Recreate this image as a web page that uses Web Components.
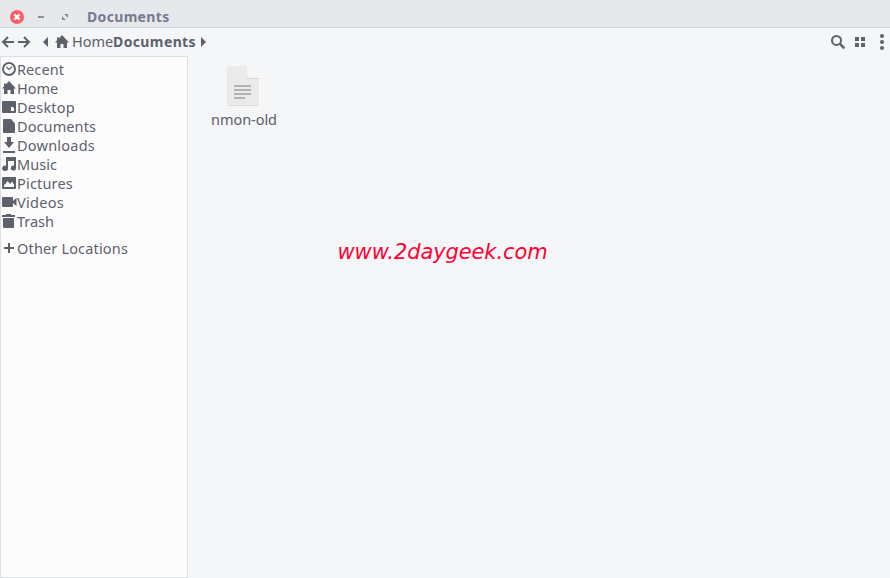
<!DOCTYPE html>
<html lang="en"><head><meta charset="utf-8"><title>Documents</title>
<style>html,body{margin:0;height:100%;overflow:hidden;background:#f5f6f8}</style></head>
<body>
<file-window></file-window>
<script>
const ICONS = {
  recent:'<circle cx="7" cy="7" r="6" fill="none" stroke="currentColor" stroke-width="1.9"/><path d="M4.4 5 7 7.4 10.2 4.6" fill="none" stroke="currentColor" stroke-width="1.2"/>',
  home:'<path d="M7 0 14 7.5H12V13H8.5V9H5.5V13H2V7.5H0L2 5.3V2.5H4V3.2Z"/>',
  desktop:'<path fill-rule="evenodd" d="M1 1H13Q14 1 14 2V12Q14 13 13 13H1Q0 13 0 12V2Q0 1 1 1ZM9 7V11H12V8L11 7Z"/>',
  document:'<path d="M2 0H9L13 4.5V13Q13 14 12 14H2Q1 14 1 13V1Q1 0 2 0Z"/>',
  download:'<path d="M5 -1H9V4H12L7 10 2 4H5ZM1 13H13V15H1Z"/>',
  music:'<path d="M4 0H14V11A2.6 2.5 0 1 1 12 8.6V4H6V11.3A2.9 2.7 0 1 1 4 8.8Z"/>',
  picture:'<path fill-rule="evenodd" d="M1 1H13Q14 1 14 2V12Q14 13 13 13H1Q0 13 0 12V2Q0 1 1 1ZM2 11H12V8.5L10 5.5 8.3 8 5.5 5 4 7.5 2 9Z"/>',
  video:'<path d="M1 2H10Q11 2 11 3V6L14.5 2.7V11.3L11 8V11Q11 12 10 12H1Q0 12 0 11V3Q0 2 1 2Z"/>',
  trash:'<path d="M0 1H4V0H9V1H13V3H0ZM1 4H12V13Q12 14 11 14H2Q1 14 1 13Z"/>',
  plus:'<path d="M6 2H8V6H12V8H8V12H6V8H2V6H6Z"/>',
  back:'<path d="M7 2 2 7 7 12M2 7H13" fill="none" stroke="currentColor" stroke-width="2"/>',
  forward:'<path d="M7 2 12 7 7 12M12 7H1" fill="none" stroke="currentColor" stroke-width="2"/>',
  left:'<path d="M9 2V12L4 7Z"/>',
  right:'<path d="M5 2V12L10 7Z"/>',
  search:'<circle cx="5.5" cy="5.4" r="4.5" fill="none" stroke="currentColor" stroke-width="2"/><path d="m8.8 8.7 4.5 4.6" stroke="currentColor" stroke-width="2.4"/>',
  grid:'<path d="M2 2H6V6H2ZM8 2H12V6H8ZM2 8H6V12H2ZM8 8H12V12H8Z"/>',
  close:'<circle cx="7" cy="7" r="7" fill="#f46067"/><path d="m4.5 4.5 5 5m0-5-5 5" stroke="#fff" stroke-width="2.3"/>',
  minimize:'<path d="M4 6H10V8H4Z"/>',
  maximize:'<path d="M6 4H10V8ZM4 6V10H8Z"/>'
};
class UiIcon extends HTMLElement {
  connectedCallback(){
    this.attachShadow({mode:'open'}).innerHTML = `<style>:host{display:block;width:14px;height:14px;flex:none}svg{display:block;overflow:visible}</style><svg width="14" height="14" viewBox="0 0 14 14" fill="currentColor">${ICONS[this.getAttribute('name')]}</svg>`;
  }
}
/* Label that distributes its letters across a given advance width. */
class FitLabel extends HTMLElement {
  connectedCallback(){
    const text = this.getAttribute('text'), w = +this.getAttribute('width');
    this.attachShadow({mode:'open'}).innerHTML = `<style>:host{display:block;white-space:pre;flex:none;width:${w}px}</style><span></span>`;
    const s = this.shadowRoot.querySelector('span');
    s.textContent = text;
    s.style.letterSpacing = (w - s.getBoundingClientRect().width) / text.length + 'px';
  }
}
class TitleBar extends HTMLElement {
  connectedCallback(){
    this.attachShadow({mode:'open'}).innerHTML = `<style>
:host{display:flex;align-items:center;box-sizing:border-box;height:28px;padding:6px 0 0 10px;gap:10px;background:#e7e8eb;border-bottom:1px solid #d2d4d8;color:#8b8f9a;font-weight:700}
ui-icon{margin-bottom:-1px}
fit-label{margin:-1px 0 0 5px;color:#757b8f;font-size:14px}</style>
<ui-icon name="close"></ui-icon><ui-icon name="minimize"></ui-icon><ui-icon name="maximize"></ui-icon><fit-label text="Documents" width="82.5"></fit-label>`;
  }
}
class PathBar extends HTMLElement {
  connectedCallback(){
    this.attachShadow({mode:'open'}).innerHTML = `<style>
:host{display:flex;align-items:center;box-sizing:border-box;height:28px;padding:0 1px}
.path{display:flex;align-items:center;flex:1}
.nav{display:flex;gap:2px;margin-right:8px}
.home{margin:0 3px 0 2px}
fit-label{margin-top:-2px}
.strong{font-weight:700;font-size:14px}
.actions{display:flex;align-items:center;gap:8px}
.more{display:grid;gap:2px;width:14px;justify-items:center}
.more i{width:4px;height:4px;border-radius:50%;background:currentColor}</style>
<div class="path"><div class="nav"><ui-icon name="back"></ui-icon><ui-icon name="forward"></ui-icon></div><ui-icon name="left"></ui-icon><ui-icon class="home" name="home"></ui-icon><fit-label text="Home" width="41"></fit-label><fit-label class="strong" text="Documents" width="83"></fit-label><ui-icon name="right"></ui-icon></div>
<div class="actions"><ui-icon name="search"></ui-icon><ui-icon name="grid"></ui-icon><div class="more"><i></i><i></i><i></i></div></div>`;
  }
}
class PlaceRow extends HTMLElement {
  connectedCallback(){
    this.attachShadow({mode:'open'}).innerHTML = `<style>:host{display:flex;align-items:center;height:19px;gap:1px}ui-icon{margin-bottom:2px}</style><ui-icon name="${this.getAttribute('icon')}"></ui-icon><fit-label text="${this.getAttribute('label')}" width="${this.getAttribute('width')}"></fit-label>`;
  }
}
class PlacesSidebar extends HTMLElement {
  connectedCallback(){
    const places = [['recent','Recent',47],['home','Home',41],['desktop','Desktop',58],['document','Documents',79],['download','Downloads',78],['music','Music',40],['picture','Pictures',56],['video','Videos',47],['trash','Trash',37],['plus','Other Locations',111]];
    this.attachShadow({mode:'open'}).innerHTML = `<style>:host{display:block;box-sizing:border-box;width:188px;flex:none;background:#fcfcfc;border:1px solid #dcdfe3;padding:3px 1px}
place-row:last-child{margin-top:8px}</style>` + places.map(([i,l,w])=>`<place-row icon="${i}" label="${l}" width="${w}"></place-row>`).join('');
  }
}
class FileItem extends HTMLElement {
  connectedCallback(){
    this.attachShadow({mode:'open'}).innerHTML = `<style>:host{display:flex;flex-direction:column;align-items:center;width:66px}svg{display:block;margin:0 2px 4px 0}</style>
<svg width="32" height="40"><path d="M2 0H20L32 12V38Q32 40 30 40H2Q0 40 0 38V2Q0 0 2 0Z" fill="#ebebeb"/><path d="M.5 38.5Q.5 39.5 2 39.5H30Q31.5 39.5 31.5 38.5" fill="none" stroke="#dcdcdc"/><path d="M20 0 32 12H22Q20 12 20 10Z" fill="#f5f5f5"/><path d="M20.5 10Q20.5 12.5 23 12.5H32" fill="none" stroke="#d7d7d8"/><path d="M7 19H24V21H7ZM7 23H24V25H7ZM7 27H24V29H7ZM7 31H18V33H7Z" fill="#b3b3b3"/></svg>
<fit-label text="nmon-old" width="66"></fit-label>`;
  }
}
class FileWindow extends HTMLElement {
  connectedCallback(){
    this.attachShadow({mode:'open'}).innerHTML = `<style>
:host{display:flex;flex-direction:column;height:100vh;background:#f5f6f8;color:#5c616c;font:14.5px/19px "Noto Sans","Open Sans",sans-serif}
.body{display:flex;flex:1;min-height:0}
main{flex:1;position:relative;padding:10px 23px}
.mark{position:absolute;left:149.5px;top:182px;color:#ff0033;font:italic 21px/28px "DejaVu Sans",sans-serif}</style>
<title-bar></title-bar><path-bar></path-bar><div class="body"><places-sidebar></places-sidebar><main><file-item></file-item><fit-label class="mark" text="www.2daygeek.com" width="210"></fit-label></main></div>`;
  }
}
customElements.define('ui-icon',UiIcon);
customElements.define('fit-label',FitLabel);
customElements.define('title-bar',TitleBar);
customElements.define('path-bar',PathBar);
customElements.define('place-row',PlaceRow);
customElements.define('places-sidebar',PlacesSidebar);
customElements.define('file-item',FileItem);
customElements.define('file-window',FileWindow);
</script>
</body></html>
